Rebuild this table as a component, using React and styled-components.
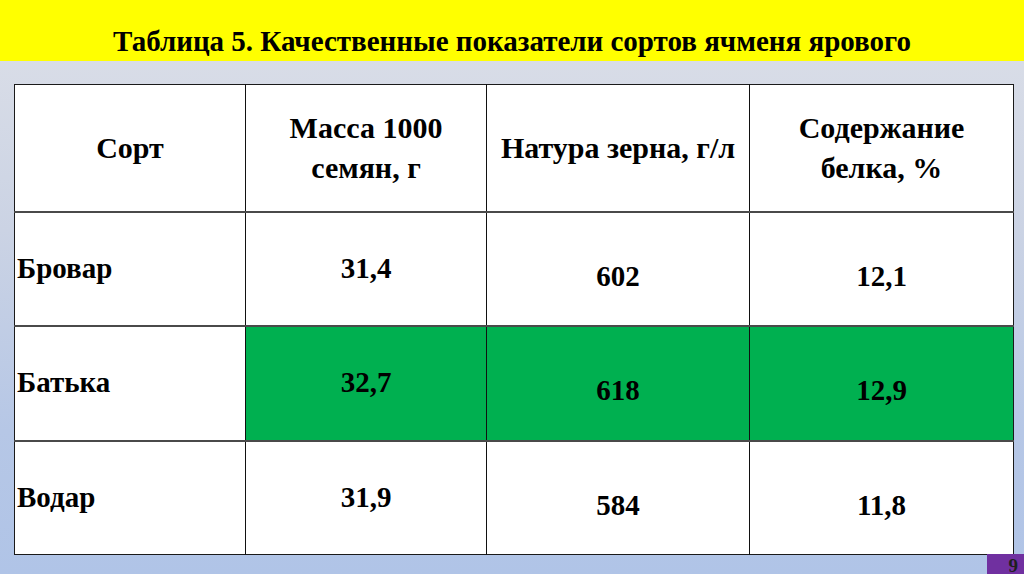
import React from "react";
import styled, { createGlobalStyle } from "styled-components";

const Global = createGlobalStyle`
  html, body { margin: 0; padding: 0; background: #fff; }
`;

const Slide = styled.div`
  width: 1024px;
  height: 574px;
  display: flex;
  flex-direction: column;
  font-family: "Times New Roman", "Liberation Serif", serif;
  background: linear-gradient(180deg, #dde0e8 0%, #cbd3e4 40%, #b6c7e6 75%, #b0c4e7 100%);
`;

const TitleBar = styled.div`
  height: 61px;
  flex: none;
  background: #ffff00;
  display: flex;
  align-items: center;
  justify-content: center;
  padding-top: 20px;
  box-sizing: border-box;
`;

const Title = styled.div`
  font-family: "Times New Roman", "Liberation Serif", serif;
  font-weight: bold;
  font-size: 29px;
  line-height: 32px;
  color: #000;
`;

const Content = styled.div`
  flex: 1;
  display: flex;
  flex-direction: column;
  padding: 23px 11px 0 14px;
`;

const Table = styled.table`
  border-collapse: collapse;
  table-layout: fixed;
  width: 999px;
  background: #fff;
  border: 1.5px solid #1a1a1a;
  font-family: "Times New Roman", "Liberation Serif", serif;
  font-weight: bold;
  color: #000;
`;

const Col = styled.col`
  width: ${(p) => p.$w}px;
`;

const Row = styled.tr`
  height: ${(p) => p.$h}px;
  border-top: 2px solid #4a4a4a;
  &:first-child { border-top: none; }
`;

const HeadCell = styled.td`
  border-left: 1px solid #111;
  &:first-child { border-left: none; }
  font-family: "Times New Roman", "Liberation Serif", serif;
  font-size: 30px;
  line-height: 40px;
  font-weight: bold;
  text-align: center;
  vertical-align: middle;
  padding: 0 6px;
`;

const Cell = styled.td`
  border-left: 1px solid #111;
  &:first-child { border-left: none; }
  background: ${(p) => (p.$green ? "#00b050" : "#fff")};
  font-family: "Times New Roman", "Liberation Serif", serif;
  font-size: 29px;
  line-height: 32px;
  text-align: ${(p) => (p.$left ? "left" : "center")};
  vertical-align: middle;
  padding: ${(p) => (p.$shift ? "14px 4px 0" : "0 4px 2px")};
  padding-left: ${(p) => (p.$left ? "2px" : "4px")};
`;

const Footer = styled.div`
  display: flex;
  justify-content: flex-end;
  margin-top: -1px;
  margin-right: -11px;
`;

const PageNum = styled.div`
  width: 37px;
  height: 21px;
  background: #7030a0;
  color: #1f1f1f;
  font-family: "Times New Roman", "Liberation Serif", serif;
  font-weight: bold;
  font-size: 19px;
  line-height: 24px;
  text-align: right;
  padding-right: 6px;
  box-sizing: border-box;
`;

const rows = [
  { name: "Бровар", mass: "31,4", nat: "602", prot: "12,1", green: false, h: 114 },
  { name: "Батька", mass: "32,7", nat: "618", prot: "12,9", green: true, h: 115 },
  { name: "Водар", mass: "31,9", nat: "584", prot: "11,8", green: false, h: 114 },
];

export default function App() {
  return (
    <>
      <Global />
      <Slide>
        <TitleBar>
          <Title>Таблица 5. Качественные показатели сортов ячменя ярового</Title>
        </TitleBar>
        <Content>
          <Table>
            <colgroup>
              <Col $w={231} />
              <Col $w={241} />
              <Col $w={263} />
              <Col $w={264} />
            </colgroup>
            <tbody>
              <Row $h={127}>
                <HeadCell>Сорт</HeadCell>
                <HeadCell>Масса 1000<br />семян, г</HeadCell>
                <HeadCell>Натура зерна, г/л</HeadCell>
                <HeadCell>Содержание<br />белка, %</HeadCell>
              </Row>
              {rows.map((r) => (
                <Row key={r.name} $h={r.h}>
                  <Cell $left>{r.name}</Cell>
                  <Cell $green={r.green}>{r.mass}</Cell>
                  <Cell $green={r.green} $shift>{r.nat}</Cell>
                  <Cell $green={r.green} $shift>{r.prot}</Cell>
                </Row>
              ))}
            </tbody>
          </Table>
          <Footer>
            <PageNum>9</PageNum>
          </Footer>
        </Content>
      </Slide>
    </>
  );
}
